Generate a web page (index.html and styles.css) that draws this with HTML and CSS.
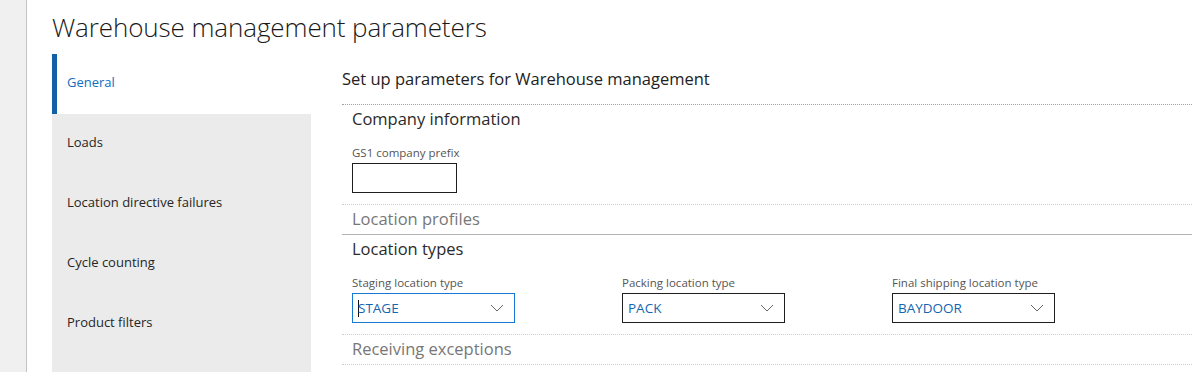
FILE: index.html
```html
<!DOCTYPE html>
<html lang="en">
<head>
<meta charset="utf-8">
<title>Warehouse management parameters</title>
<link rel="stylesheet" href="styles.css">
</head>
<body>
<div class="app">
  <div class="rail"></div>
  <main class="page">
    <h1 class="title">Warehouse management parameters</h1>
    <div class="layout">
      <nav class="tabs">
        <div class="tab active">General</div>
        <div class="tab">Loads</div>
        <div class="tab">Location directive failures</div>
        <div class="tab">Cycle counting</div>
        <div class="tab">Product filters</div>
      </nav>
      <section class="content">
        <div class="intro">Set up parameters for Warehouse management</div>
        <div class="group open strong">
          <div class="group-head">Company information</div>
          <div class="fields">
            <div class="field">
              <label class="field-label">GS1 company prefix</label>
              <div class="input small"></div>
            </div>
          </div>
        </div>
        <div class="group">
          <div class="group-head muted">Location profiles</div>
        </div>
        <div class="group open solid">
          <div class="group-head">Location types</div>
          <div class="fields">
            <div class="field">
              <label class="field-label">Staging location type</label>
              <div class="input select focus"><span class="caret"></span><span class="value">STAGE</span>
                <svg class="chev" width="14" height="8" viewBox="0 0 14 8"><path d="M1 1 L7 7 L13 1" fill="none" stroke="#666" stroke-width="1"/></svg>
              </div>
            </div>
            <div class="field">
              <label class="field-label">Packing location type</label>
              <div class="input select"><span class="value">PACK</span>
                <svg class="chev" width="14" height="8" viewBox="0 0 14 8"><path d="M1 1 L7 7 L13 1" fill="none" stroke="#666" stroke-width="1"/></svg>
              </div>
            </div>
            <div class="field">
              <label class="field-label">Final shipping location type</label>
              <div class="input select"><span class="value">BAYDOOR</span>
                <svg class="chev" width="14" height="8" viewBox="0 0 14 8"><path d="M1 1 L7 7 L13 1" fill="none" stroke="#666" stroke-width="1"/></svg>
              </div>
            </div>
          </div>
        </div>
        <div class="group">
          <div class="group-head muted">Receiving exceptions</div>
        </div>
        <div class="group end"></div>
      </section>
    </div>
  </main>
</div>
</body>
</html>
```

FILE: styles.css
```css
* { box-sizing: border-box; margin: 0; padding: 0; }
html, body { height: 100%; overflow: hidden; }
body {
  font-family: "Open Sans", "Noto Sans", sans-serif;
  background: #ffffff;
  color: #222;
}
.app { display: flex; height: 372px; overflow: hidden; }
.rail {
  width: 27px;
  flex: none;
  background: #f0f0f0;
  border-right: 1px solid #c4c4c4;
}
.page { flex: 1; padding-left: 25px; display: flex; flex-direction: column; min-height: 0; }
.title {
  height: 54px;
  flex: none;
  font-weight: 300;
  font-size: 26px;
  line-height: 54px;
  color: #1a1a1a;
  letter-spacing: -0.1px;
}
.layout { display: flex; flex: 1; gap: 31px; min-height: 0; overflow: hidden; }
.tabs {
  width: 259px;
  flex: none;
  background: #ebebeb;
  display: flex;
  flex-direction: column;
}
.tab {
  height: 60px;
  flex: none;
  display: flex;
  align-items: center;
  padding-left: 15px;
  padding-bottom: 4px;
  font-size: 13px;
  color: #262626;
}
.tab.active {
  background: #fff;
  color: #106ebe;
  border-left: 5px solid #1160a8;
  padding-left: 10px;
}
.content { flex: 1; display: flex; flex-direction: column; min-height: 0; overflow: hidden; }
.intro {
  height: 50px;
  flex: none;
  padding-top: 13px;
  font-size: 16.5px;
  color: #222;
}
.group { flex: none; border-top: 1px dotted #cfcfcf; padding-left: 10px; }
.group.strong { border-top-color: #a3a3a3; }
.group.solid { border-top: 1px solid #b4b4b4; }
.group.end { height: 8px; }
.group-head {
  height: 29px;
  line-height: 28px;
  font-size: 16.5px;
  color: #2a2a2a;
}
.group-head.muted { color: #777; }
.fields { display: flex; gap: 107px; padding-top: 10px; padding-bottom: 11px; }
.field { display: flex; flex-direction: column; }
.field-label {
  height: 19px;
  line-height: 18px;
  font-size: 11.5px;
  color: #555;
}
.input {
  height: 30px;
  border: 1px solid #1f1f1f;
  background: #fff;
}
.input.small { width: 105px; }
.input.select {
  width: 163px;
  display: flex;
  align-items: center;
  padding-left: 5px;
  padding-right: 10px;
}
.input.focus { border-color: #1879d4; }
.caret {
  display: block;
  width: 1px;
  height: 17px;
  background: #111;
  margin-right: -1px;
}
.value { flex: 1; font-size: 13.5px; color: #1465b0; }
.chev { flex: none; }
```
